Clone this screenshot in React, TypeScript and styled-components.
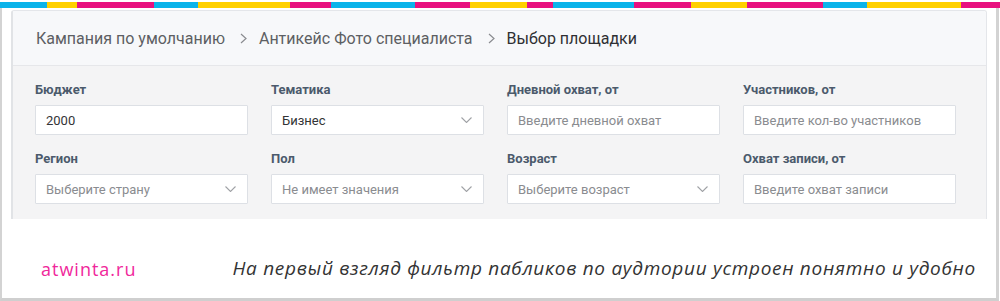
import * as React from "react";
import styled, { createGlobalStyle } from "styled-components";

const GlobalStyle = createGlobalStyle`
  html, body {
    margin: 0;
    padding: 0;
    background: #ffffff;
  }
  body {
    font-family: Roboto, "Liberation Sans", sans-serif;
  }
  * {
    box-sizing: border-box;
  }
`;

const stripes: [number, string][] = [
  [47, "#0bb3ea"],
  [30, "#ffd000"],
  [77, "#e8117f"],
  [44, "#0bb3ea"],
  [92, "#ffd000"],
  [41, "#e8117f"],
  [84, "#0bb3ea"],
  [55, "#e8117f"],
  [57, "#ffd000"],
  [26, "#e8117f"],
  [81, "#0bb3ea"],
  [57, "#e8117f"],
  [56, "#ffd000"],
  [76, "#e8117f"],
  [44, "#0bb3ea"],
  [94, "#ffd000"],
  [39, "#e8117f"],
];

const Page = styled.div`
  width: 1000px;
  height: 301px;
  display: flex;
  flex-direction: column;
  overflow: hidden;
`;

const Stripe = styled.div`
  display: flex;
  height: 6px;
  margin-top: 2px;
  flex: none;
`;

const StripePiece = styled.div<{ $color: string }>`
  height: 100%;
  background: ${({ $color }) => $color};
`;

const Frame = styled.div`
  flex: 1;
  display: flex;
  flex-direction: column;
  border-left: 2px solid #d3d3d3;
  border-right: 3px solid #d3d3d3;
  border-bottom: 3px solid #cfcfcf;
  margin-right: 1px;
  padding: 2px 9px 0 9px;
`;

const Card = styled.div`
  border: 1px solid #e4e6ea;
  border-left: 2px solid #e1e3e6;
  border-bottom: none;
  border-radius: 3px 3px 0 0;
  overflow: hidden;
`;

const Header = styled.div`
  height: 55px;
  display: flex;
  align-items: center;
  padding: 1px 0 0 23px;
  background: #f7f8fa;
  border-bottom: 1px solid #e6e7ea;
  font-size: 16px;
  color: #5d5f63;
`;

const Crumb = styled.span<{ $current?: boolean }>`
  color: ${({ $current }) => ($current ? "#2f3033" : "#5d5f63")};
`;

const CrumbSep = styled.svg`
  width: 7px;
  height: 11px;
  margin: 0 12px 0 15px;
  flex: none;
`;

const Form = styled.div`
  background: #f4f4f5;
  padding: 17px 32px 15px 22px;
  display: grid;
  grid-template-columns: repeat(4, 213px);
  column-gap: 23px;
  row-gap: 17px;
`;

const Field = styled.div`
  display: flex;
  flex-direction: column;
  gap: 8px;
`;

const Label = styled.div`
  font-size: 13px;
  line-height: 14px;
  font-weight: 700;
  color: #4b5a6c;
`;

const Box = styled.div<{ $placeholder?: boolean }>`
  height: 30px;
  background: #ffffff;
  border: 1px solid #dde0e5;
  border-radius: 1px;
  display: flex;
  align-items: center;
  justify-content: space-between;
  padding: 0 11px 0 10px;
  font-size: 13px;
  color: ${({ $placeholder }) => ($placeholder ? "#8a8c90" : "#333436")};
`;

const Chevron = styled.svg`
  width: 11px;
  height: 6px;
  flex: none;
`;

const Footer = styled.div`
  flex: 1;
  display: flex;
  align-items: flex-end;
  justify-content: space-between;
  padding: 0 11px 17px 30px;
`;

const Brand = styled.div`
  font-family: "Open Sans", Lato, sans-serif;
  font-size: 18px;
  letter-spacing: 1px;
  color: #f0289b;
`;

const Caption = styled.div`
  font-family: "Open Sans", Lato, sans-serif;
  font-style: italic;
  font-size: 19px;
  color: #333333;
  letter-spacing: 0.7px;
`;

const Arrow = () => (
  <CrumbSep viewBox="0 0 7 11">
    <path d="M1 1l5 4.5L1 10" fill="none" stroke="#8a8c90" strokeWidth="1.2" />
  </CrumbSep>
);

const Down = () => (
  <Chevron viewBox="0 0 11 6">
    <path d="M0.5 0.5l5 5 5-5" fill="none" stroke="#a0a2a6" strokeWidth="1.1" />
  </Chevron>
);

type FieldDef = { label: string; value: string; placeholder?: boolean; select?: boolean };

const fields: FieldDef[] = [
  { label: "Бюджет", value: "2000" },
  { label: "Тематика", value: "Бизнес", select: true },
  { label: "Дневной охват, от", value: "Введите дневной охват", placeholder: true },
  { label: "Участников, от", value: "Введите кол-во участников", placeholder: true },
  { label: "Регион", value: "Выберите страну", placeholder: true, select: true },
  { label: "Пол", value: "Не имеет значения", placeholder: true, select: true },
  { label: "Возраст", value: "Выберите возраст", placeholder: true, select: true },
  { label: "Охват записи, от", value: "Введите охват записи", placeholder: true },
];

export default function App() {
  return (
    <Page>
      <GlobalStyle />
      <Stripe>
        {stripes.map(([w, c], i) => (
          <StripePiece key={i} $color={c} style={{ width: w }} />
        ))}
      </Stripe>
      <Frame>
        <Card>
          <Header>
            <Crumb>Кампания по умолчанию</Crumb>
            <Arrow />
            <Crumb>Антикейс Фото специалиста</Crumb>
            <Arrow />
            <Crumb $current>Выбор площадки</Crumb>
          </Header>
          <Form>
            {fields.map((f) => (
              <Field key={f.label}>
                <Label>{f.label}</Label>
                <Box $placeholder={f.placeholder}>
                  <span>{f.value}</span>
                  {f.select && <Down />}
                </Box>
              </Field>
            ))}
          </Form>
        </Card>
        <Footer>
          <Brand>atwinta.ru</Brand>
          <Caption>На первый взгляд фильтр пабликов по аудтории устроен понятно и удобно</Caption>
        </Footer>
      </Frame>
    </Page>
  );
}
